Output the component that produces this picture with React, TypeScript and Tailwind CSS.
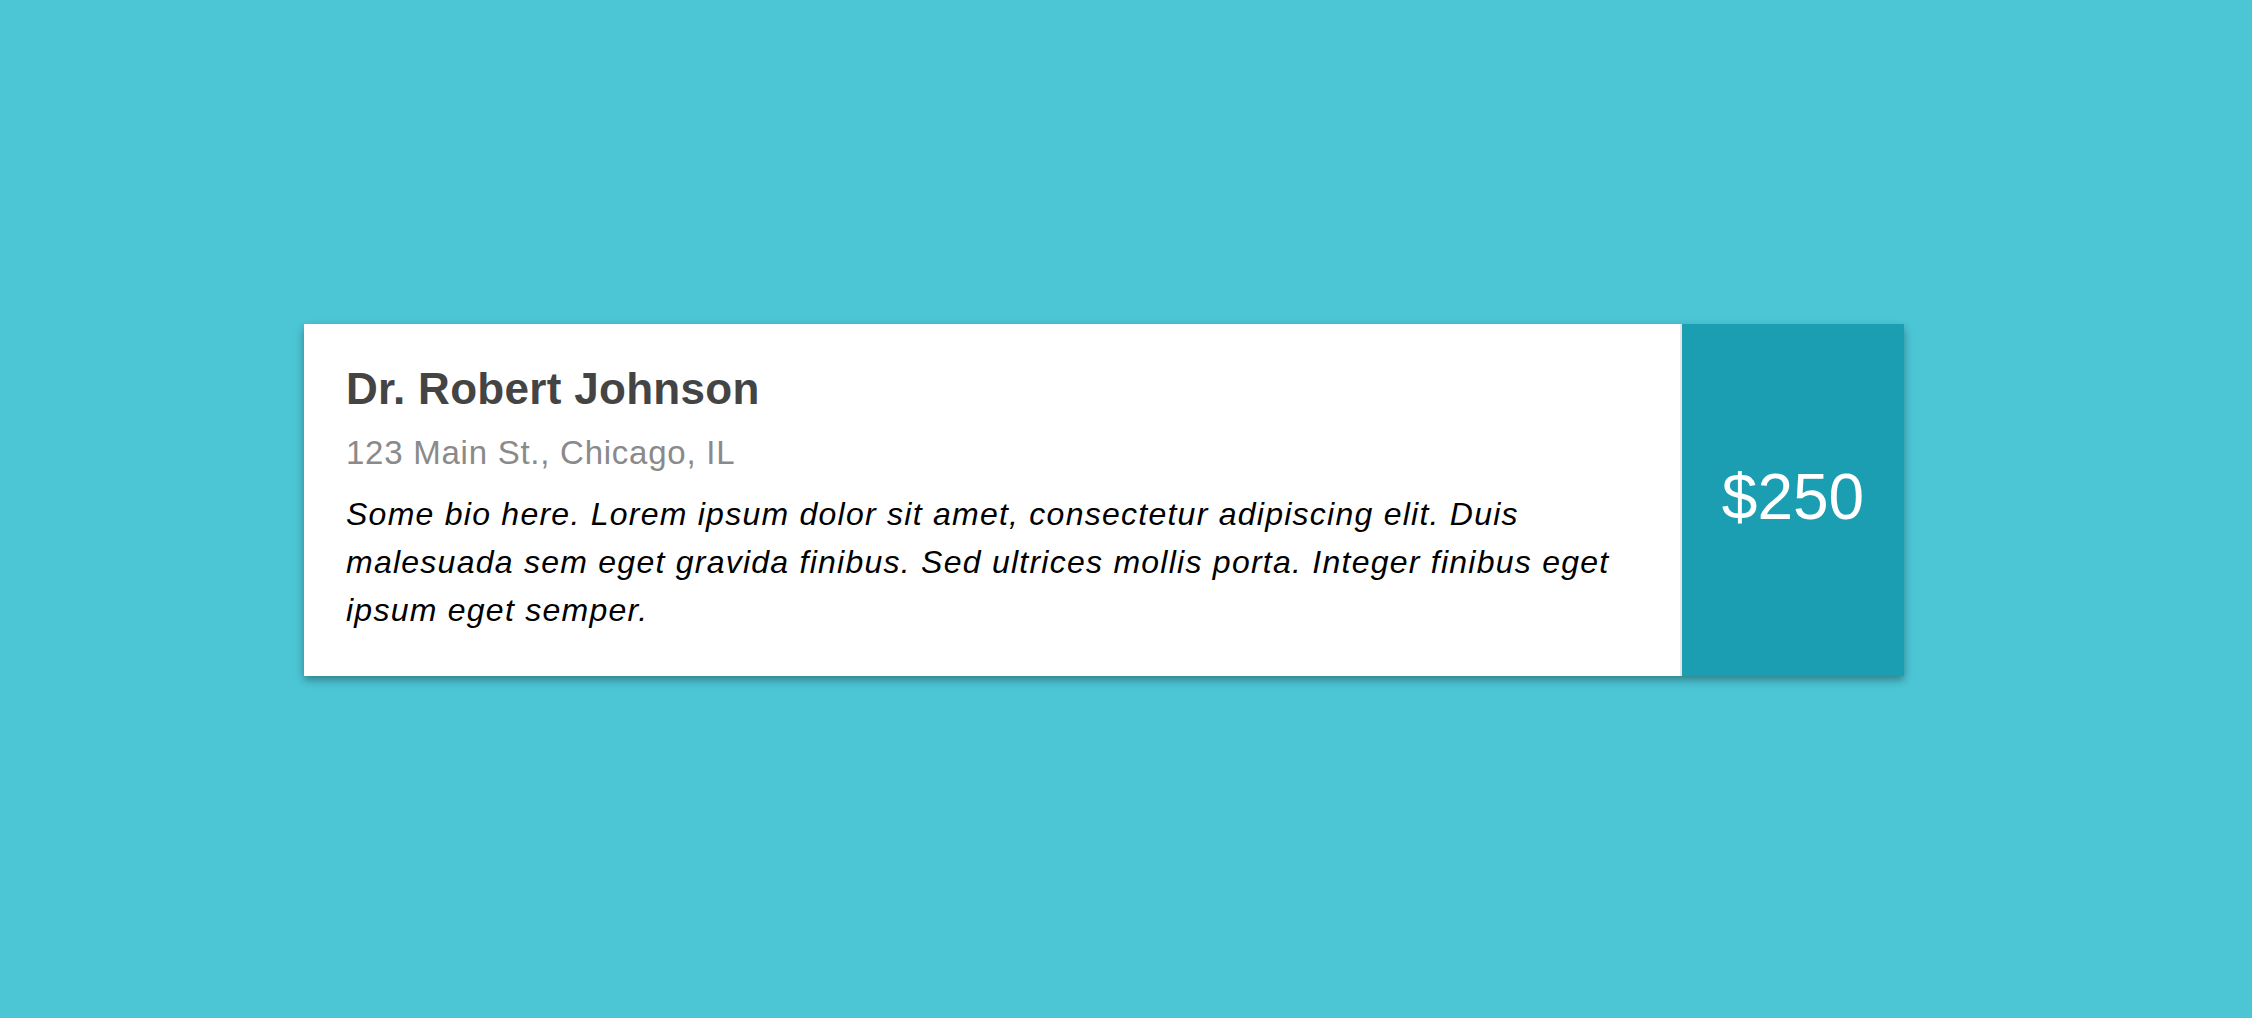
import React from "react";

export default function App() {
  return (
    <div className="min-h-screen w-full bg-[#4cc5d5] pl-[304px] pt-[324px]" style={{ height: 1018 }}>
      <div
        className="flex w-[1600px] h-[352px] shadow-[0_4px_8px_rgba(0,0,0,0.35)]"
        style={{ fontFamily: '"Liberation Sans", Arial, sans-serif' }}
      >
        <div className="flex-1 bg-white pl-[42px] pr-[50px] pt-[40px] border-r-2 border-[#e6e6e6]">
          <h1 className="text-[44px] leading-[50px] font-bold text-[#444444] tracking-[0.3px]">Dr. Robert Johnson</h1>
          <p className="mt-[20px] text-[33px] leading-[38px] text-[#8a8a8a] tracking-[0.75px]">123 Main St., Chicago, IL</p>
          <p className="mt-[18px] text-[32px] leading-[48px] italic text-black tracking-[1.25px]">
            Some bio here. Lorem ipsum dolor sit amet, consectetur adipiscing elit. Duis malesuada sem eget gravida finibus. Sed ultrices mollis porta. Integer finibus eget ipsum eget semper.
          </p>
        </div>
        <div className="w-[222px] bg-[#1b9eb2] flex items-center justify-center pb-[6px]">
          <span className="text-[64px] leading-none text-white">$250</span>
        </div>
      </div>
    </div>
  );
}
